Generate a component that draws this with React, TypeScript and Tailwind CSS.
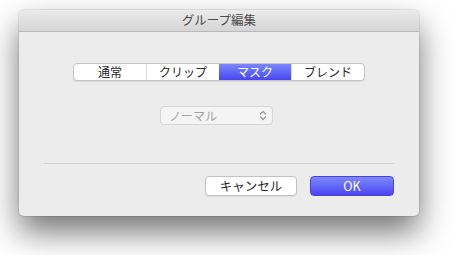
import React from 'react';

const font = { fontFamily: '"Noto Sans CJK JP", "Liberation Sans", sans-serif' };

const segments = ['通常', 'クリップ', 'マスク', 'ブレンド'];

const Segmented: React.FC<{ active: number }> = ({ active }) => (
  <div className="flex h-[18px] w-[292px] rounded-[4px] border border-[#c4c4c4] bg-white shadow-[0_1px_0_rgba(0,0,0,0.08)] overflow-hidden">
    {segments.map((s, i) => (
      <div
        key={s}
        className={`flex-1 flex items-center justify-center text-[12px] leading-none
          ${i > 0 ? 'border-l border-[#dcdcdc]' : ''}
          ${i === active ? 'bg-gradient-to-b from-[#7b86fd] to-[#4a43f1] text-white border-l-0' : 'text-[#262626]'}`}
      >
        {s}
      </div>
    ))}
  </div>
);

export default function App() {
  return (
    <div className="w-[456px] h-[255px] bg-white overflow-hidden pt-[10px] pl-[19px]" style={font}>
      <div className="w-[400px] h-[206px] rounded-[5px] bg-[#ececec] flex flex-col shadow-[0_16px_32px_rgba(0,0,0,0.55),0_0_0_1px_rgba(0,0,0,0.08)] overflow-hidden">
        {/* Title bar */}
        <div className="h-[22px] shrink-0 bg-gradient-to-b from-[#ebebeb] to-[#d5d5d5] border-b border-[#b9b9b9] flex items-center justify-center text-[12.5px] text-[#4a4a4a]">
          グループ編集
        </div>

        <div className="flex flex-col items-center pt-[31px]">
          <Segmented active={2} />

          <div className="mt-[25px] mr-[5px] w-[113px] h-[19px] rounded-[4px] border border-[#d6d6d6] bg-[#f4f4f4] flex items-center justify-between pl-[8px] pr-[5px] text-[12px] text-[#a3a3a3]">
            <span>ノーマル</span>
            <svg width="8" height="11" viewBox="0 0 8 11" fill="none" stroke="#9a9a9a" strokeWidth="1.2" strokeLinecap="round" strokeLinejoin="round">
              <path d="M1.5 4 L4 1.5 L6.5 4" />
              <path d="M1.5 7 L4 9.5 L6.5 7" />
            </svg>
          </div>

          <div className="mt-[38px] w-[350px] border-t border-[#d3d3d3]" />

          <div className="w-[350px] flex justify-end gap-[13px] mt-[12px]">
            <button className="w-[92px] h-[20px] rounded-[4px] border border-[#c2c2c2] bg-white shadow-[0_1px_0_rgba(0,0,0,0.06)] text-[12.5px] text-[#262626] flex items-center justify-center leading-none">
              キャンセル
            </button>
            <button className="w-[84px] h-[20px] rounded-[4px] border border-[#4a40e0] bg-gradient-to-b from-[#7d88fd] to-[#4b43f0] text-[12.5px] text-white flex items-center justify-center leading-none">
              OK
            </button>
          </div>
        </div>
      </div>
    </div>
  );
}
